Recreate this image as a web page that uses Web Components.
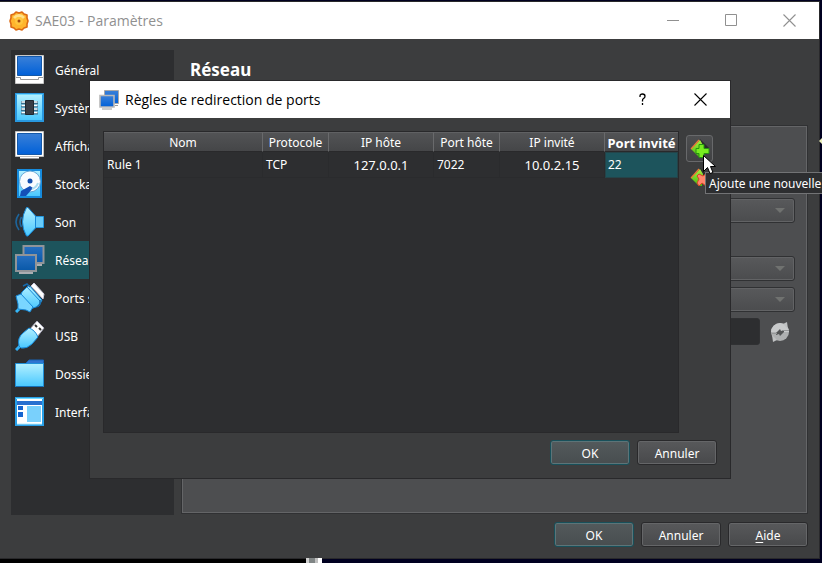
<!DOCTYPE html>
<html lang="fr">
<head>
<meta charset="utf-8">
<title>SAE03 - Paramètres</title>
<style>
html, body { margin: 0; height: 100%; overflow: hidden; }
body { font: 12px/16px "Noto Sans", "Open Sans", sans-serif; color: #fff; background: #000020; }
</style>
</head>
<body>
<settings-desktop></settings-desktop>
<script>
const define = (name, html, setup) => {
  const template = document.createElement('template');
  template.innerHTML = html;
  customElements.define(name, class extends HTMLElement {
    constructor() {
      super();
      this.attachShadow({ mode: 'open' }).append(template.content.cloneNode(true));
    }
    connectedCallback() { if (setup) setup(this, this.shadowRoot); }
  });
};

const blue = '<linearGradient id="b" x1="0" y1="0" x2="0" y2="1"><stop stop-color="#3a80d8"/><stop offset="1" stop-color="#0060d8"/></linearGradient>';
const cyan = '<linearGradient id="c" x1="0" y1="0" x2="0" y2="1"><stop stop-color="#b4f0ff"/><stop offset="1" stop-color="#48c8ff"/></linearGradient>';
const green = '<linearGradient id="g" x1="0" y1="0" x2="0" y2="1"><stop stop-color="#a8f040"/><stop offset="1" stop-color="#46b80c"/></linearGradient>';
const defs = `<defs>${blue}${cyan}${green}<linearGradient id="n" x1="0" y1="0" x2="0" y2="1"><stop stop-color="#2870c0"/><stop offset="1" stop-color="#0858a8"/></linearGradient></defs>`;

const icons = {
  general: [30, '<path d="M.5 .5h28v28H.5z" fill="#fff" stroke="#c8c8c8"/><path d="M2.500 1.500h24v19h-24z" fill="url(#b)" stroke="#1458a8"/><path d="M1 22.500h4.500v2h18v-2H28" fill="none" stroke="#999"/>'],
  system: [30, '<path d="M1 1h27v27H1z" fill="url(#c)" stroke="#2898e0" stroke-width="2"/><path d="M1.500 1.500h26" stroke="#70d8ff"/><path d="M6 9.500h17M6 13h17M6 16.500h17M6 20h17" stroke="#397090" stroke-width="3"/><path d="M6.500 9h16M6.500 12.500h16M6.500 16h16M6.500 19.500h16" stroke="#fff" stroke-width="1.500"/><path d="M10.500 7.500h8v14h-8z" fill="#383c44" stroke="#202830"/>'],
  display: [30, '<path d="M.5 .5h28v25H.5z" fill="#fff" stroke="#c0c0c0"/><path d="M5 26h19v1.500H5z" fill="#fff"/><path d="M2.500 2.500h24v21h-24z" fill="url(#b)" stroke="#1458a8"/>'],
  storage: [30, '<path d="M3 1h23v27H3z" fill="url(#c)" stroke="#168bdd" stroke-width="2"/><circle cx="15" cy="12.500" r="10.500" fill="#f8fcff" stroke="#68a8d8"/><path d="M6 22l9-5 3 2-7 8H5z" fill="#1450b8"/><path d="M17 20c3-1 5-3 6-6" stroke="#aadcf0" fill="none" stroke-width="2"/><circle cx="15" cy="12" r="2.500" fill="#134fae"/>'],
  sound: [30, '<path d="M19 9.500h9.500v11H19z" fill="#68ccfa" stroke="#2498e0"/><path d="M11.500 .5h1.500L20.500 9v12L13 29h-1.500Q3.500 15 11.500 .5z" fill="url(#c)" stroke="#1688d8"/><path d="M4 7Q-2 15 4 23M6.500 10q-3 5 0 10" fill="none" stroke="#1d659c" stroke-width="1.600"/>'],
  network: [30, '<path d="M8.500 1h20v17h-20z" fill="url(#n)" stroke="#909498" stroke-width="2"/><path d="M1 10h20v16H1z" fill="url(#n)" stroke="#909498" stroke-width="2"/><path d="M4 28h14M22 20h5" stroke="#aaaeb2" stroke-width="2"/>'],
  ports: [30, '<path d="M1 29l6-6" stroke="#35b7f8" stroke-width="3"/><path d="M7 9L14 2l13 15-3 6-9 3-5-1-7-7z" fill="url(#c)" stroke="#1688d8"/><path d="M1 13l5-2 12 13-3 5-4-2-8-1 0-5z" fill="#7ad6ff" stroke="#1688d8"/><path d="M12 4l13 14" stroke="#1688d8"/><path d="M8 3l4-2 3 3M25 17v4l-3 3" fill="none" stroke="#1668a8" stroke-width="1.500"/><path d="M16 3l3-3 10 11-1 5z" fill="#fff" stroke="#ccd"/>'],
  usb: [30, '<path d="M15 8l7-8 7 7-7 9z" fill="#fff" stroke="#aab"/><path d="M20 4l2 2m2 1l2 2" stroke="#333" stroke-width="2"/><path d="M1 29l5-5" stroke="#33aff4" stroke-width="3"/><path d="M4 25Q2 17 8 12l6-5q6 2 9 9l-6 7q-5 5-11 4z" fill="url(#c)" stroke="#1688d8"/>'],
  folder: [30, '<path d="M10 5l4-4h14.500v5z" fill="#2f75d0" stroke="#1862b5"/><path d="M.5 4.500h28v23H.5z" fill="url(#c)" stroke="#2090d8"/><path d="M1 27.500h27" stroke="#1470b8"/>'],
  interface: [30, '<path d="M1 1h27v27H1z" fill="#fff" stroke="#28a0e8" stroke-width="2"/><path d="M1 1.500h27" stroke="#74dcff"/><path d="M2 4h25v4H2z" fill="#2870d0"/><path d="M3 9h5v4H3zM3 15h5v5H3z" fill="#1664cf"/><path d="M12 9h14v16H12z" fill="#79d0fc"/><path d="M2 27h25" stroke="#b6ecff"/>'],
  rules: [20, '<path d="M5.500 .5h14v13h-14z" fill="url(#b)" stroke="#a9a9a9"/><path d="M1 5.500h14v11.500H1z" fill="url(#b)" stroke="#b9b9b9" stroke-width="1.600"/><path d="M3 19h10M16 15.500h3" stroke="#999"/>'],
  gear: [20, '<path d="M7 1l3 1 3-1 2 2 3 1 0 3 1 3-1 3 0 3-3 1-2 2-3-1-3 1-2-2-3-1 0-3-1-3 1-3 0-3 3-1z" fill="#ffb52d" stroke="#dc6a14" stroke-width="1.600" stroke-linejoin="round"/><path d="M5 7q5-5 10 0" fill="none" stroke="#ffe18a" stroke-width="3"/><circle cx="10" cy="10" r="4" fill="#ffc63f"/><circle cx="10" cy="10" r="1.500" fill="#a14a10"/>'],
  add: [20, '<path d="M10 0l9 9-9 9z" fill="#292b2c"/><path d="M1 10l9-9 3 5-1 12-3 0z" fill="url(#g)"/><path d="M1 10l8-9" stroke="#f07838" stroke-width="1.200"/><path d="M9 5.500h5v4h5v5h-5v4H9v-4H6v-5h3z" fill="#78ed20" stroke="#279410"/>'],
  remove: [20, '<path d="M10 0l9 9-9 9z" fill="#292b2c"/><path d="M1 10l9-9 3 5-1 12-3 0z" fill="url(#g)"/><path d="M1 10l8-9" stroke="#f07838" stroke-width="1.200"/><path d="M9 6l4 2 4-3 2 3-3 4 3 4-3 2-4-3-3 3-2-3 2-4-2-3z" fill="#ff866b" stroke="#d44422"/>'],
  refresh: [20, '<circle cx="10" cy="10" r="9" fill="#aeb0b1"/><path d="M1 10a9 9 0 0 1 18 0z" fill="#c8cacb"/><path d="M13 2l4-2 1 7zM7 18l-4 2-1-7z" fill="#bfc1c2"/><path d="M6 11l4-4 1 2 3-1v2l-4 4-1-2-3 1z" fill="#535556"/><path d="M1 11.500h6M13 8.500h6" stroke="#969899"/>'],
  minimize: [13, '<path d="M0 6.500h12" stroke="currentColor"/>'],
  maximize: [13, '<path d="M.5 .5h11v11H.5z" fill="none" stroke="currentColor"/>'],
  close: [13, '<path d="M.5 .5l12 12m0-12l-12 12" stroke="currentColor" stroke-width="1.100"/>'],
  help: [13, '<path d="M4 4V3q0-2 2.500-2T9 3.200q0 1.500-1.500 2.300-1 .7-1 2v1M6.500 10v2" fill="none" stroke="currentColor" stroke-width="1.300"/>']
};

define('ui-icon', '<style>:host{display:block;flex:none}svg{display:block}</style>', (host, root) => {
  const entry = icons[host.getAttribute('name')];
  if (!entry || root.querySelector('svg')) return;
  const [size, shapes] = entry;
  root.innerHTML += `<svg aria-hidden="true" width="${size}" height="${size}" viewBox="0 0 ${size} ${size}">${defs}${shapes}</svg>`;
});

define('push-button', `<style>
  :host{display:block;width:80px}
  button{box-sizing:border-box;display:block;width:100%;height:25px;padding:2px 0 0;font:inherit;color:#fff;border:1px solid #29292b;border-radius:3px;background:linear-gradient(#58595b,#48494b);box-shadow:inset 0 0 0 1px #656668}
  :host([primary]) button{border-color:#18505a;background:linear-gradient(#535a5c,#484d4f);box-shadow:inset 0 0 0 1px #5c7478}
  ::slotted(u){text-underline-offset:2px}
</style><button type="button"><slot></slot></button>`);

define('title-button', `<style>
  :host{display:block}
  button{display:grid;place-items:center;width:58px;height:36px;padding:0;border:0;background:none;color:inherit}
</style><button type="button"><slot></slot></button>`, (host, root) => {
  root.querySelector('button').setAttribute('aria-label', host.getAttribute('label'));
});

define('ui-window', `<style>
  :host{display:flex;flex-direction:column;box-sizing:border-box;background:#3c3d3e;border:1px solid #29292b}
  header{display:flex;align-items:center;height:37px;background:#fff;color:var(--title,#000);font:14px/20px "Open Sans",sans-serif;padding:0 1px 0 var(--inset,8px)}
  .text{margin-left:6px;flex:1;white-space:nowrap}
  .controls{display:flex}
  .body{flex:1;display:flex;flex-direction:column;min-height:0}
</style><header><slot name="icon"></slot><span class="text"><slot name="title"></slot></span><span class="controls"><slot name="controls"></slot></span></header><div class="body"><slot></slot></div>`);

define('category-item', `<style>
  :host{display:block}
  a{display:flex;align-items:center;gap:10px;height:38px;padding-left:3px;color:#fff;text-decoration:none;white-space:nowrap}
  span{padding-top:2px}
  :host([selected]) a{background:#1d545c}
</style><a href="#"><span><slot></slot></span></a>`, (host, root) => {
  if (root.querySelector('ui-icon')) return;
  const icon = document.createElement('ui-icon');
  icon.setAttribute('name', host.getAttribute('icon'));
  root.querySelector('a').prepend(icon);
});

define('combo-box', `<style>
  :host{display:grid;align-items:center}
  select{grid-area:1/1;appearance:none;box-sizing:border-box;width:100%;height:25px;border:1px solid #303133;border-radius:3px;background:linear-gradient(#58595b,#4b4c4e);box-shadow:inset 0 0 0 1px #626365;color:#929394;font:inherit;padding:0 8px;opacity:1}
  i{grid-area:1/1;justify-self:end;margin-right:10px;border:5px solid transparent;border-top-color:#707270;border-bottom:0;pointer-events:none}
</style><select disabled><option></option></select><i></i>`, (host, root) => {
  root.querySelector('select').setAttribute('aria-label', host.getAttribute('label'));
});

define('rules-table', `<style>
  :host{display:block;box-sizing:border-box;flex:1;min-width:0;min-height:302px;background:#2d2e30;border:1px solid #29292b}
  table{width:100%;table-layout:fixed;border-collapse:separate;border-spacing:0}
  th,td{box-sizing:border-box;padding:0 3px;white-space:nowrap}
  th{height:20px;padding:1px 0 0;line-height:16px;font-weight:400;text-align:center;background:linear-gradient(#525355,#454648);border-top:1px solid #606163;border-right:1px solid #696a6c;border-bottom:1px solid #29292b}
  th:last-child{font-weight:700;font-size:13px;border-right:0}
  td{height:26px;border-right:1px solid #2a2b2d;border-bottom:1px solid #2a2b2d;text-align:left}
  td.ip{text-align:center;font-size:13px}
  td.current{padding:0 2px;background:#1d545c;border:1px solid #244449}
  .protocol{width:66px}.address{width:105px}.port{width:66px}.guest{width:73px}
</style><table><colgroup><col><col class="protocol"><col class="address"><col class="port"><col class="address"><col class="guest"></colgroup>
<thead><tr><th>Nom</th><th>Protocole</th><th>IP hôte</th><th>Port hôte</th><th>IP invité</th><th>Port invité</th></tr></thead>
<tbody><tr><td>Rule 1</td><td>TCP</td><td class="ip">127.0.0.1</td><td>7022</td><td class="ip">10.0.2.15</td><td class="current">22</td></tr></tbody></table>`);

define('rule-tools', `<style>
  :host{display:flex;flex-direction:column;gap:2px;width:27px;padding-top:4px}
  .tool{position:relative}
  button{box-sizing:border-box;display:grid;place-items:center;width:27px;height:27px;padding:0;border:1px solid transparent;border-radius:3px;background:none}
  .hover{border-color:#68696b;background:linear-gradient(#4d4e50,#404143)}
  .tip{position:absolute;z-index:1;left:19px;top:37px;box-sizing:border-box;height:22px;padding:3px;border:1px solid #727375;background:#2d2e30;white-space:nowrap}
  .pointer{position:absolute;z-index:2;left:17px;top:20px}
</style>
<div class="tool"><button type="button" class="hover" aria-label="Ajouter une règle" aria-describedby="tip"><ui-icon name="add"></ui-icon></button><div class="tip" id="tip" role="tooltip">Ajoute une nouvelle</div>
<svg class="pointer" aria-hidden="true" width="13" height="20"><path d="M.5 .5v16l4-4 2.500 6 3-1-2.500-6h5z" fill="#fff" stroke="#000"/></svg></div>
<div class="tool"><button type="button" aria-label="Supprimer la règle"><ui-icon name="remove"></ui-icon></button></div>`);

define('network-page', `<style>
  :host{display:flex;flex-direction:column;flex:1;min-width:0}
  h1{margin:10px 9px 0;font:700 17px/20px "Noto Sans",sans-serif}
  .panel{flex:1;margin:45px 0 1px;box-sizing:border-box;border:1px solid #303133;box-shadow:inset 0 0 0 1px #646567;background:#4d4e50;padding:72px 12px 0;display:flex;flex-direction:column}
  .gap{margin-top:33px}
  .near{margin-top:6px}
  .mac{display:flex;align-items:center;gap:10px;margin-top:6px}
  input{flex:1;min-width:0;box-sizing:border-box;height:27px;border:1px solid #303133;border-radius:3px;background:#2d2e30}
  button{padding:0;border:0;background:none;margin-right:5px}
</style><h1>Réseau</h1><div class="panel">
<combo-box label="Mode d'accès réseau"></combo-box>
<combo-box class="gap" label="Type d'interface"></combo-box>
<combo-box class="near" label="Mode Promiscuité"></combo-box>
<div class="mac"><input aria-label="Adresse MAC" disabled><button type="button" aria-label="Générer une adresse MAC"><ui-icon name="refresh"></ui-icon></button></div></div>`);

define('settings-desktop', `<style>
  :host{display:flex;box-sizing:border-box;position:relative;height:100vh;overflow:hidden;padding:1px 2px 4px 0;background:#000020}
  .main{flex:1;border-left:0;--title:#909090;--inset:9px}
  .content{flex:1;display:flex;gap:7px;padding:11px 11px 0}
  nav{width:163px;box-sizing:border-box;padding:1px;background:#2d2e30}
  .actions{display:flex;justify-content:flex-end;gap:7px;padding:7px 11px 11px}
  .dialog{position:absolute;left:89px;right:91px;top:80px;--inset:9px}
  .rules{display:flex;gap:7px;padding:13px 17px 0 13px}
  .dialog .actions{padding:7px 13px 13px}
  .strip{position:absolute;bottom:0;left:0;width:306px;height:4px;background:#000}
  .chip{position:absolute;bottom:0;left:306px;width:16px;height:5px;background:linear-gradient(90deg,#d0d0d0 3px,#808585 3px 9px,#c0c0c0 9px 12px,#fff 12px)}
  .mark{position:absolute;right:0;top:138px;width:3px;height:6px}
</style>
<div class="strip"></div>
<ui-window class="main"><ui-icon slot="icon" name="gear"></ui-icon><span slot="title">SAE03 - Paramètres</span>
<title-button slot="controls" label="Réduire"><ui-icon name="minimize"></ui-icon></title-button><title-button slot="controls" label="Agrandir"><ui-icon name="maximize"></ui-icon></title-button><title-button slot="controls" label="Fermer"><ui-icon name="close"></ui-icon></title-button>
<div class="content"><nav>
<category-item icon="general">Général</category-item><category-item icon="system">Système</category-item><category-item icon="display">Affichage</category-item><category-item icon="storage">Stockage</category-item><category-item icon="sound">Son</category-item><category-item icon="network" selected>Réseau</category-item><category-item icon="ports">Ports séries</category-item><category-item icon="usb">USB</category-item><category-item icon="folder">Dossiers partagés</category-item><category-item icon="interface">Interface utilisateur</category-item>
</nav><network-page></network-page></div>
<div class="actions"><push-button primary>OK</push-button><push-button>Annuler</push-button><push-button><u>A</u>ide</push-button></div></ui-window>
<div class="chip"></div>
<svg class="mark" aria-hidden="true"><path d="M0 3l3-3v6z" fill="#e9edba"/></svg>
<ui-window class="dialog" role="dialog" aria-label="Règles de redirection de ports"><ui-icon slot="icon" name="rules"></ui-icon><span slot="title">Règles de redirection de ports</span>
<title-button slot="controls" label="Aide"><ui-icon name="help"></ui-icon></title-button><title-button slot="controls" label="Fermer"><ui-icon name="close"></ui-icon></title-button>
<div class="rules"><rules-table></rules-table><rule-tools></rule-tools></div>
<div class="actions"><push-button primary>OK</push-button><push-button>Annuler</push-button></div></ui-window>`);
</script>
</body>
</html>
